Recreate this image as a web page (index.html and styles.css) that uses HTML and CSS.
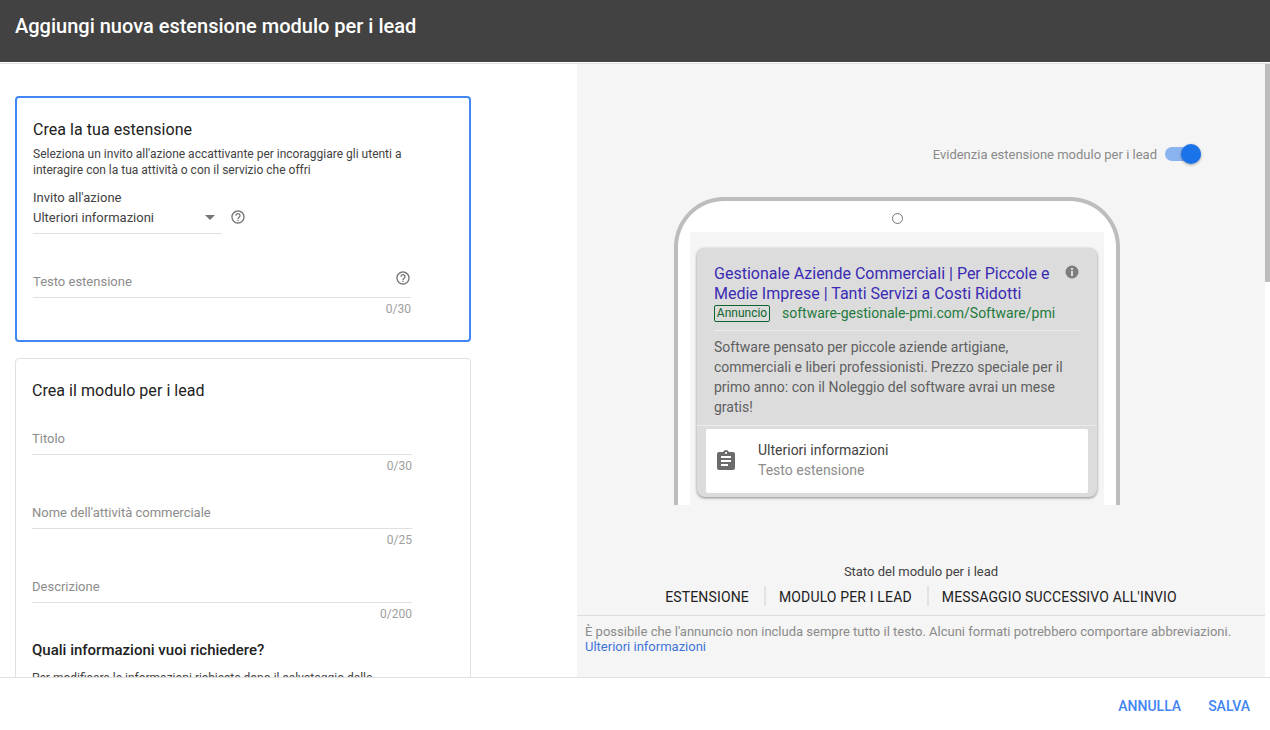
FILE: index.html
```html
<!DOCTYPE html>
<html lang="it">
<head>
<meta charset="utf-8">
<title>Aggiungi nuova estensione modulo per i lead</title>
<link rel="stylesheet" href="styles.css">
</head>
<body>
<div class="app">
  <header class="topbar"><h1>Aggiungi nuova estensione modulo per i lead</h1></header>
  <main class="main">
    <section class="left">
      <div class="card card-active">
        <h2 class="card-title">Crea la tua estensione</h2>
        <p class="card-desc">Seleziona un invito all'azione accattivante per incoraggiare gli utenti a interagire con la tua attività o con il servizio che offri</p>
        <div class="select-label">Invito all'azione</div>
        <div class="select-row">
          <div class="select"><span>Ulteriori informazioni</span><i class="caret"></i></div>
          <svg class="help" viewBox="0 0 24 24" width="16" height="16"><path d="M11 18h2v-2h-2v2zm1-16C6.48 2 2 6.48 2 12s4.48 10 10 10 10-4.48 10-10S17.52 2 12 2zm0 18c-4.41 0-8-3.59-8-8s3.59-8 8-8 8 3.59 8 8-3.59 8-8 8zm0-14c-2.21 0-4 1.79-4 4h2c0-1.100.9-2 2-2s2 .9 2 2c0 2-3 1.750-3 5h2c0-2.250 3-2.500 3-5 0-2.210-1.790-4-4-4z"/></svg>
        </div>
        <div class="field field-ext">
          <div class="field-line"><span>Testo estensione</span>
            <svg class="help help-end" viewBox="0 0 24 24" width="16" height="16"><path d="M11 18h2v-2h-2v2zm1-16C6.48 2 2 6.48 2 12s4.48 10 10 10 10-4.48 10-10S17.52 2 12 2zm0 18c-4.41 0-8-3.59-8-8s3.59-8 8-8 8 3.59 8 8-3.59 8-8 8zm0-14c-2.21 0-4 1.79-4 4h2c0-1.100.9-2 2-2s2 .9 2 2c0 2-3 1.750-3 5h2c0-2.250 3-2.500 3-5 0-2.210-1.790-4-4-4z"/></svg>
          </div>
          <div class="count">0/30</div>
        </div>
      </div>
      <div class="card card-form">
        <h2 class="card-title">Crea il modulo per i lead</h2>
        <div class="field"><div class="field-line"><span>Titolo</span></div><div class="count">0/30</div></div>
        <div class="field"><div class="field-line"><span>Nome dell'attività commerciale</span></div><div class="count">0/25</div></div>
        <div class="field"><div class="field-line"><span>Descrizione</span></div><div class="count">0/200</div></div>
        <h2 class="card-subtitle">Quali informazioni vuoi richiedere?</h2>
        <p class="card-desc card-desc-form">Per modificare le informazioni richieste dopo il salvataggio della</p>
      </div>
    </section>
    <section class="right">
      <div class="preview">
        <div class="toggle-row">
          <span>Evidenzia estensione modulo per i lead</span>
          <div class="toggle"><i class="knob"></i></div>
        </div>
        <div class="phone">
          <div class="camera-row"><i class="camera"></i></div>
          <div class="screen">
            <div class="ad">
              <div class="ad-top">
                <div class="ad-head">
                  <a class="ad-title">Gestionale Aziende Commerciali | Per Piccole e Medie Imprese | Tanti Servizi a Costi Ridotti</a>
                  <svg class="ad-info" viewBox="0 0 14 14" width="14" height="14"><circle cx="7" cy="7" r="6.500" fill="#7d7d7d"/><rect x="6" y="6" width="2" height="5" fill="#dcdcdc"/><rect x="6" y="3" width="2" height="2" fill="#dcdcdc"/></svg>
                </div>
                <div class="ad-url-row"><span class="ad-badge">Annuncio</span><span class="ad-url">software-gestionale-pmi.com/Software/pmi</span></div>
              </div>
              <p class="ad-desc">Software pensato per piccole aziende artigiane, commerciali e liberi professionisti. Prezzo speciale per il primo anno: con il Noleggio del software avrai un mese gratis!</p>
              <div class="ad-ext">
                <svg class="ext-icon" viewBox="0 0 24 24" width="24" height="24"><path fill="#6b6b6b" d="M19 3h-4.180C14.400 1.840 13.300 1 12 1c-1.300 0-2.400.84-2.820 2H5c-1.100 0-2 .9-2 2v14c0 1.100.9 2 2 2h14c1.100 0 2-.9 2-2V5c0-1.100-.9-2-2-2zm-7 0c.55 0 1 .45 1 1s-.45 1-1 1-1-.45-1-1 .45-1 1-1zm2 14H7v-2h7v2zm3-4H7v-2h10v2zm0-4H7V7h10v2z"/></svg>
                <div class="ext-text"><div class="ext-main">Ulteriori informazioni</div><div class="ext-sub">Testo estensione</div></div>
              </div>
            </div>
          </div>
        </div>
        <div class="status">Stato del modulo per i lead</div>
        <nav class="tabs"><span>ESTENSIONE</span><span>MODULO PER I LEAD</span><span>MESSAGGIO SUCCESSIVO ALL'INVIO</span></nav>
      </div>
      <div class="note">È possibile che l'annuncio non includa sempre tutto il testo. Alcuni formati potrebbero comportare abbreviazioni. <a>Ulteriori informazioni</a></div>
    </section>
    <div class="scroll"><i class="thumb"></i></div>
  </main>
  <footer class="footer"><a>ANNULLA</a><a>SALVA</a></footer>
</div>
</body>
</html>
```
FILE: styles.css
```css
* { box-sizing: border-box; }
html, body { margin: 0; height: 100%; overflow: hidden; }
body { font-family: Roboto, "Liberation Sans", sans-serif; color: #212121; background: #fff; }
.app { width: 1270px; height: 730px; display: flex; flex-direction: column; }
.topbar { height: 62px; flex: none; background: #424242; padding: 14px 15px 0; }
.topbar h1 { margin: 0; font-size: 20px; line-height: 24px; font-weight: 500; color: #fff; }
.main { flex: none; height: 615px; margin-top: 1px; border-top: 1px solid #e0e0e0; border-bottom: 1px solid #e0e0e0; display: flex; overflow: hidden; }
.left { width: 577px; flex: none; padding: 32px 106px 0 15px; overflow: hidden; }
.card { width: 456px; border: 1px solid #e0e0e0; border-radius: 4px; padding: 0 16px; }
.card-active { height: 246px; border: 2px solid #4285f4; padding: 22px 16px 0; margin-bottom: 16px; }
.card-form { height: 400px; padding-top: 22px; }
.card-title { margin: 0; font-size: 16px; line-height: 20px; font-weight: 400; letter-spacing: .05px; color: #212121; }
.card-subtitle { margin: 18px 0 0; font-size: 15px; line-height: 20px; font-weight: 500; color: #212121; }
.card-desc { margin: 6px 0 0; font-size: 12px; line-height: 16px; color: #424242; width: 390px; }
.card-desc-form { margin-top: 10px; }
.select-label { margin-top: 12px; font-size: 13px; line-height: 16px; color: #424242; }
.select-row { display: flex; align-items: flex-start; gap: 8px; }
.select { width: 189px; height: 28px; border-bottom: 1px solid #e0e0e0; display: flex; justify-content: space-between; align-items: flex-start; padding: 4px 2px 0 0; font-size: 13px; line-height: 16px; color: #424242; }
.caret { width: 0; height: 0; margin: 5px 5px 0 0; border: 5px solid transparent; border-top: 5px solid #757575; border-bottom: 0; }
.help { fill: #757575; margin-top: 3px; flex: none; }
.field { width: 380px; margin-top: 24px; }
.field-ext { width: 378px; margin-top: 33px; }
.field-line { height: 31px; border-bottom: 1px solid #e0e0e0; display: flex; justify-content: space-between; align-items: flex-start; padding-top: 7px; font-size: 13px; line-height: 16px; color: #8c8c8c; }
.help-end { margin-top: -4px; }
.count { margin-top: 3px; font-size: 12px; line-height: 16px; text-align: right; color: #9e9e9e; }
.card-form .field:nth-of-type(1) { margin-top: 23px; }
.right { width: 688px; flex: none; background: #f5f5f5; display: flex; flex-direction: column; overflow: hidden; }
.preview { flex: none; height: 552px; display: flex; flex-direction: column; border-bottom: 1px solid #dcdcdc; }
.toggle-row { display: flex; justify-content: flex-end; align-items: center; gap: 8px; height: 22px; margin-top: 79px; padding-right: 64px; font-size: 13px; color: #8a8a8a; }
.toggle { width: 36px; height: 14px; border-radius: 7px; background: #8ab4f0; position: relative; }
.knob { position: absolute; right: 0; top: -3px; width: 20px; height: 20px; border-radius: 50%; background: #1a73e8; box-shadow: 0 1px 3px rgba(0,0,0,.35); }
.phone { width: 446px; height: 308px; margin: 32px 0 0 97px; border: 4px solid #bdbdbd; border-bottom: 0; border-radius: 50px 50px 0 0; background: #fff; padding: 0 12px; flex: none; overflow: hidden; }
.camera-row { height: 31px; display: flex; justify-content: center; align-items: flex-start; padding-top: 12px; }
.camera { width: 11px; height: 11px; border: 1px solid #757575; border-radius: 50%; }
.screen { height: 273px; background: #f5f5f5; padding: 16px 7px 0; overflow: hidden; }
.ad { width: 400px; height: 249px; background: #dcdcdc; border-radius: 8px; box-shadow: 0 1px 3px rgba(0,0,0,.45); padding: 16px 9px 0; }
.ad-top { margin: 0 8px; border-bottom: 1px solid #ececec; height: 67px; }
.ad-head { display: flex; justify-content: space-between; align-items: flex-start; }
.ad-title { width: 345px; font-size: 16px; line-height: 20px; color: #3a2bb3; }
.ad-info { margin: 1px 1px 0 0; }
.ad-url-row { display: flex; align-items: center; gap: 12px; height: 20px; margin-top: -1px; }
.ad-badge { width: 56px; height: 17px; border: 1px solid #0d652d; border-radius: 2px; font-size: 12px; line-height: 15px; text-align: center; color: #0d652d; }
.ad-url { font-size: 14px; color: #1e7a3c; }
.ad-desc { margin: 0 -9px; padding: 6px 17px 0; height: 95px; border-bottom: 1px solid #ececec; font-size: 14px; line-height: 20px; color: #5f5f5f; }
.ad-ext { height: 64px; margin-top: 3px; background: #fff; border-radius: 2px; display: flex; align-items: center; gap: 20px; padding-left: 8px; }
.ext-text { margin-top: -3px; }
.ext-main { font-size: 14px; line-height: 20px; color: #424242; }
.ext-sub { font-size: 14px; line-height: 20px; color: #8c8c8c; }
.status { margin-top: 59px; text-align: center; font-size: 13px; line-height: 16px; color: #424242; }
.tabs { display: flex; justify-content: center; margin-top: 6px; height: 20px; }
.tabs span { font-size: 14px; line-height: 22px; letter-spacing: .15px; color: #212121; padding: 0 15px 0 13px; border-left: 2px solid #e4e4e4; }
.tabs span:first-child { border-left: 0; padding-left: 15px; }
.note { padding: 8px 8px 0; font-size: 13px; line-height: 15px; color: #8a8a8a; width: 680px; }
.note a { color: #3f74d8; display: block; }
.scroll { width: 5px; flex: none; background: #fff; }
.thumb { display: block; width: 5px; height: 218px; background: #bdbdbd; }
.footer { flex: 1; display: flex; justify-content: flex-end; align-items: center; gap: 27px; padding: 4px 20px 0 0; font-size: 14px; font-weight: 500; color: #4285f4; }
```
